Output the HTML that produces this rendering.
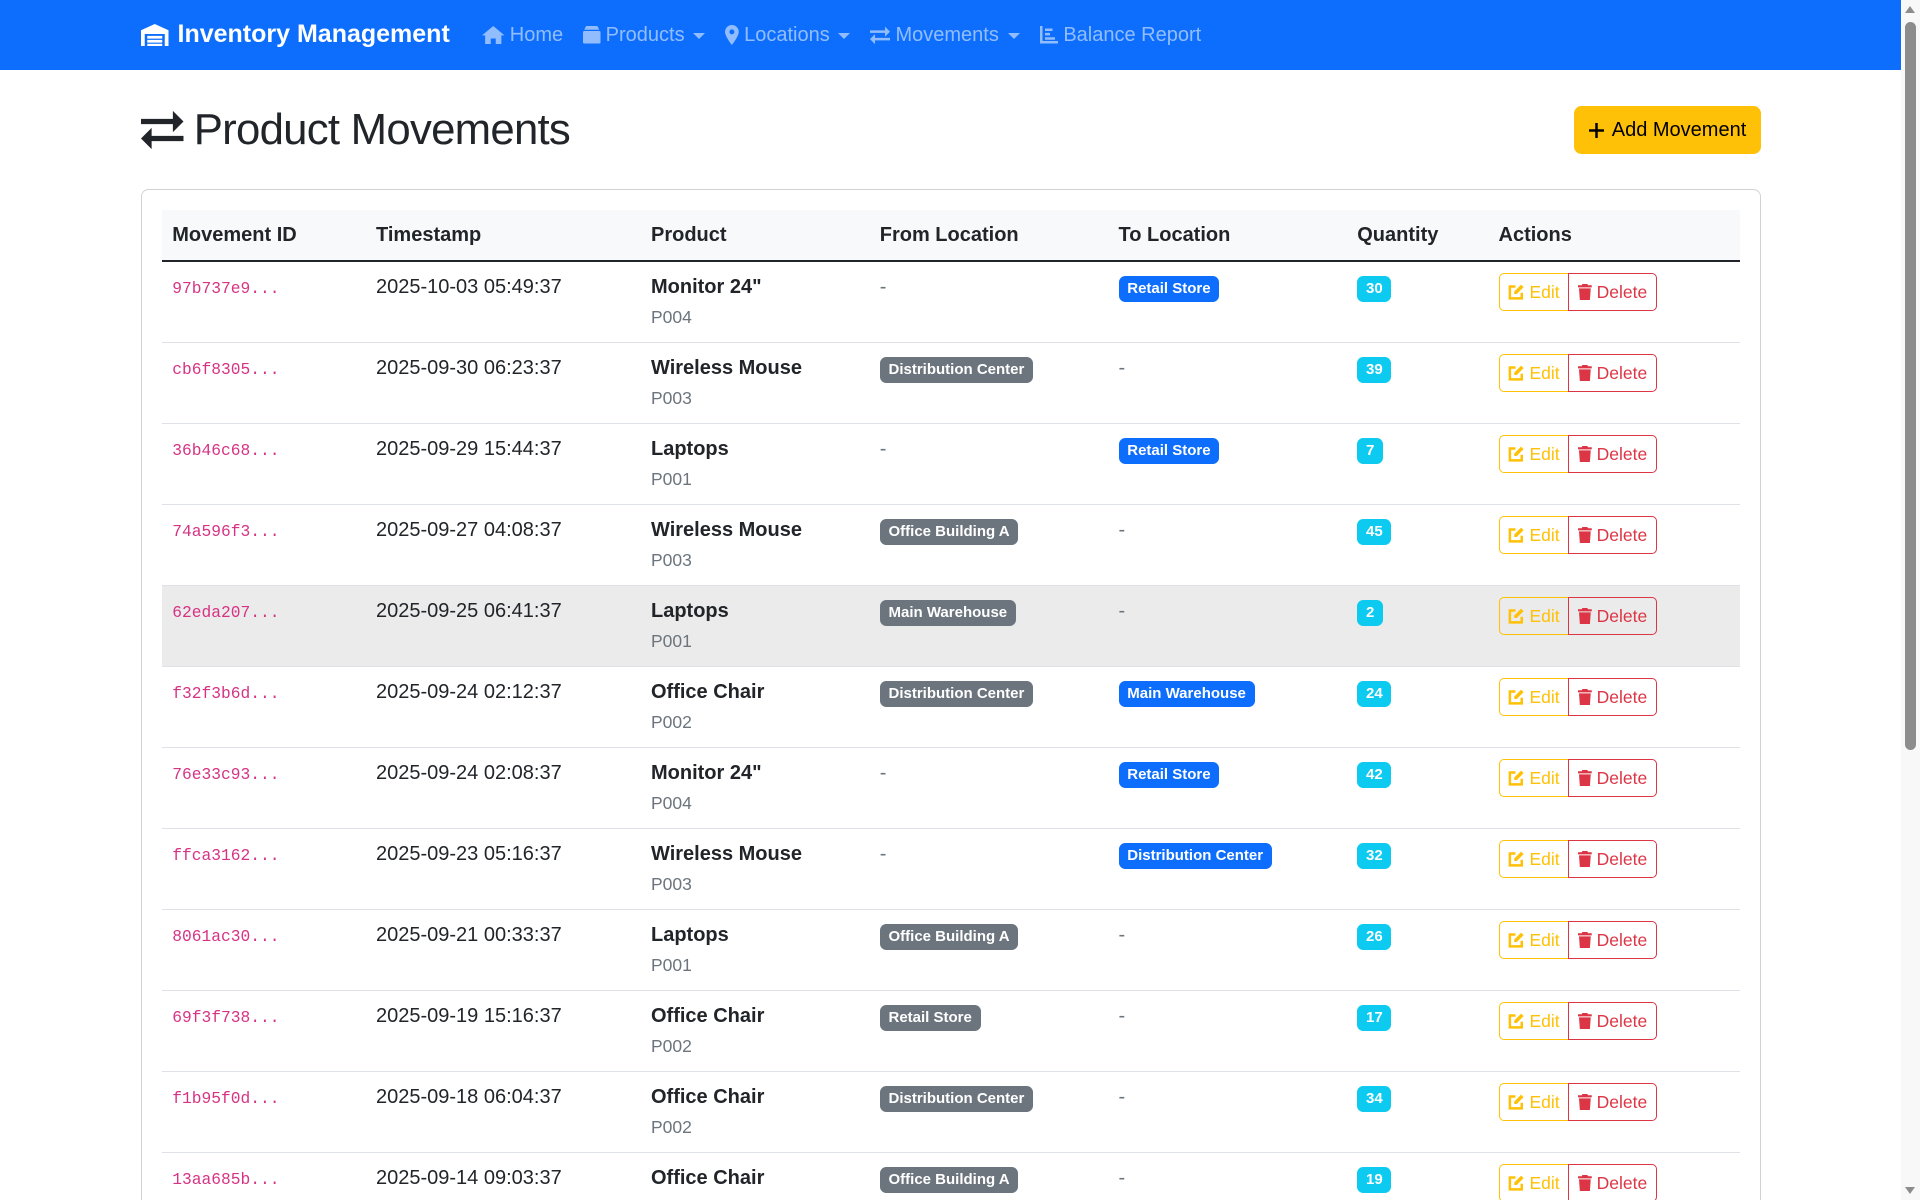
<!DOCTYPE html>
<html><head><meta charset="utf-8"><style>
html,body{margin:0;padding:0;overflow:hidden;background:#fff;height:1200px}
#sb{position:fixed;right:0;top:0;width:19px;height:1200px;background:#f8f8f8}
#sb .t{position:absolute;left:4px;top:22px;width:11px;height:728px;background:#8c8c8c;border-radius:6px}
#sb .up{position:absolute;left:4px;top:6px;border:5px solid transparent;border-bottom:7px solid #8c8c8c;border-top:0}
#sb .dn{position:absolute;left:4px;bottom:6px;border:5px solid transparent;border-top:7px solid #8c8c8c;border-bottom:0}
#w{zoom:1.25;width:1522px;height:960px;overflow:hidden;font-family:"Liberation Sans",sans-serif;color:#212529;font-size:16px;line-height:1.5}
.nav{background:#0d6efd;height:56px}
.c{width:1296px;margin:0 auto;position:relative}
.nav .c{display:flex;align-items:center;height:56px}
.brand{color:#fff;font-weight:bold;font-size:20px;display:flex;align-items:center;margin-right:18px}
.brand svg{margin-right:7px}
.nl{color:rgba(255,255,255,.55);display:flex;align-items:center;padding:0 8px;font-size:16px}
.nl svg{margin-right:4px;fill:rgba(255,255,255,.55)}
.car{display:inline-block;margin-left:7px;border-top:5px solid rgba(255,255,255,.55);border-left:5px solid transparent;border-right:5px solid transparent;margin-top:2px}
h1{margin:0;font-size:35px;letter-spacing:-0.6px;font-weight:500;display:flex;align-items:center;position:absolute;left:0;top:27px;line-height:1.2}
h1 svg{margin-right:8px}
.add{position:absolute;right:0;top:29px;background:#ffc107;border-radius:6px;height:38px;padding:0 12px;display:flex;align-items:center;font-size:16px;color:#000}
.card{position:absolute;left:0;top:95px;border:1px solid rgba(0,0,0,.175);border-radius:6px;padding:16px;box-sizing:border-box;width:1296px;height:1000px}
table{border-collapse:collapse;width:1262px;table-layout:fixed}
th{background:#f8f9fa;text-align:left;padding:8px;font-weight:bold;height:24px;border-bottom:2px solid #212529}
td{padding:8px;vertical-align:top;border-bottom:1px solid #dee2e6;height:48px}
tr.h td{background:#ebebeb}
code{font-family:"Liberation Mono",monospace;color:#d63384;font-size:13px}
.pn{font-weight:bold;display:block}
.pc{font-size:14px;color:#6c757d;display:block;margin-top:2px}
.b{display:inline-block;font-size:12px;font-weight:bold;color:#fff;padding:3px 7px;border-radius:5px;line-height:1.2}
.bs{background:#6c757d}.bp{background:#0d6efd}.bi{background:#0dcaf0}
.dash{color:#6c757d}
.bg{display:inline-flex;margin-top:1px}
.be,.bd{height:29px;display:flex;align-items:center;font-size:14px;padding:0 7px;border:1px solid}
.be{color:#ffc107;border-color:#ffc107;border-radius:4px 0 0 4px}
.bd{color:#dc3545;border-color:#dc3545;border-radius:0 4px 4px 0;margin-left:-1px}
.be svg,.bd svg{margin-right:4px}
</style></head><body>
<div id="sb"><div class="up"></div><div class="t"></div><div class="dn"></div></div>
<div id="w">
<div class="nav"><div class="c">
<div class="brand"><svg width="22" height="18" viewBox="0 0 22 18"><path d="M11 0L22 5V18H19V8H3V18H0V5Z" fill="#fff"/><rect x="5" y="9.5" width="12" height="2.2" fill="#fff"/><rect x="5" y="12.7" width="12" height="2.2" fill="#fff"/><rect x="5" y="15.8" width="12" height="2.2" fill="#fff"/></svg>Inventory Management</div>
<div class="nl"><svg width="18" height="15" viewBox="0 0 18 15"><path d="M9 0L18 7.5H15.5V15H11V10H7V15H2.5V7.5H0Z"/></svg>Home</div>
<div class="nl"><svg width="14" height="14" viewBox="0 0 14 14"><rect x="0" y="4" width="14" height="10" rx="1"/><path d="M1 3L2.5 0H11.5L13 3Z"/></svg>Products<span class="car"></span></div>
<div class="nl"><svg width="11" height="16" viewBox="0 0 11 16"><path d="M5.5 0A5.5 5.5 0 0 1 11 5.5C11 9 5.5 16 5.5 16S0 9 0 5.5A5.5 5.5 0 0 1 5.5 0ZM5.5 3.5A2 2 0 1 0 5.5 7.5A2 2 0 1 0 5.5 3.5Z" fill-rule="evenodd"/></svg>Locations<span class="car"></span></div>
<div class="nl"><svg width="16" height="15" viewBox="0 0 16 15"><path d="M0 3.5H12V0.5L16 4.5L12 8.5V5.5H0ZM16 11.5H4V14.5L0 10.5L4 6.5V9.5H16Z"/></svg>Movements<span class="car"></span></div>
<div class="nl"><svg width="15" height="14" viewBox="0 0 15 14"><path d="M0 0H2V12H15V14H0Z"/><rect x="4" y="2" width="6" height="2"/><rect x="4" y="5.5" width="4" height="2"/><rect x="4" y="9" width="8" height="2"/></svg>Balance Report</div>
</div></div>
<div class="c">
<h1><svg width="34" height="32" viewBox="0 0 16 15"><path d="M0 3.3H12V0.3L16 4.3L12 8.3V5.3H0ZM16 11.7H4V14.7L0 10.7L4 6.7V9.7H16Z" fill="#212529"/></svg>Product Movements</h1>
<div class="add"><svg width="12" height="12" viewBox="0 0 12 12" style="margin-right:6px"><path d="M5 0H7V5H12V7H7V12H5V7H0V5H5Z" fill="#000"/></svg>Add Movement</div>
<div class="card">
<table>
<colgroup><col style="width:163px"><col style="width:220px"><col style="width:183px"><col style="width:191px"><col style="width:191px"><col style="width:113px"><col style="width:201px"></colgroup>
<tr><th>Movement ID</th><th>Timestamp</th><th>Product</th><th>From Location</th><th>To Location</th><th>Quantity</th><th>Actions</th></tr>
<tbody id="tb">
</tbody></table>
</div></div></div>
<script>
var d=[["97b737e9...","2025-10-03 05:49:37","Monitor 24\"","P004","","Retail Store","30"],
["cb6f8305...","2025-09-30 06:23:37","Wireless Mouse","P003","Distribution Center","","39"],
["36b46c68...","2025-09-29 15:44:37","Laptops","P001","","Retail Store","7"],
["74a596f3...","2025-09-27 04:08:37","Wireless Mouse","P003","Office Building A","","45"],
["62eda207...","2025-09-25 06:41:37","Laptops","P001","Main Warehouse","","2"],
["f32f3b6d...","2025-09-24 02:12:37","Office Chair","P002","Distribution Center","Main Warehouse","24"],
["76e33c93...","2025-09-24 02:08:37","Monitor 24\"","P004","","Retail Store","42"],
["ffca3162...","2025-09-23 05:16:37","Wireless Mouse","P003","","Distribution Center","32"],
["8061ac30...","2025-09-21 00:33:37","Laptops","P001","Office Building A","","26"],
["69f3f738...","2025-09-19 15:16:37","Office Chair","P002","Retail Store","","17"],
["f1b95f0d...","2025-09-18 06:04:37","Office Chair","P002","Distribution Center","","34"],
["13aa685b...","2025-09-14 09:03:37","Office Chair","P002","Office Building A","","19"]];
var edit='<svg width="13" height="13" viewBox="0 0 13 13"><path d="M6 2H1.5V11.5H11V7" fill="none" stroke="#ffc107" stroke-width="2"/><path d="M10.5 0.5L12.5 2.5L7 8H5V6Z" fill="#ffc107"/></svg>';
var del='<svg width="11" height="13" viewBox="0 0 11 13"><path d="M3.5 0H7.5L8 1H11V2.7H0V1H3Z" fill="#dc3545"/><path d="M0.8 3.5H10.2L9.5 13H1.5Z" fill="#dc3545"/></svg>';
var h='';
d.forEach(function(r,i){
 function loc(v,c){return v?'<span class="b '+c+'">'+v+'</span>':'<span class="dash">-</span>';}
 h+='<tr'+(i==4?' class="h"':'')+'><td><code>'+r[0]+'</code></td><td>'+r[1]+'</td><td><span class="pn">'+r[2].replace('"','&quot;')+'</span><span class="pc">'+r[3]+'</span></td><td>'+loc(r[4],'bs')+'</td><td>'+loc(r[5],'bp')+'</td><td><span class="b bi">'+r[6]+'</span></td><td><div class="bg"><div class="be">'+edit+'Edit</div><div class="bd">'+del+'Delete</div></div></td></tr>';
});
document.getElementById('tb').innerHTML=h;
</script>
</body></html>
